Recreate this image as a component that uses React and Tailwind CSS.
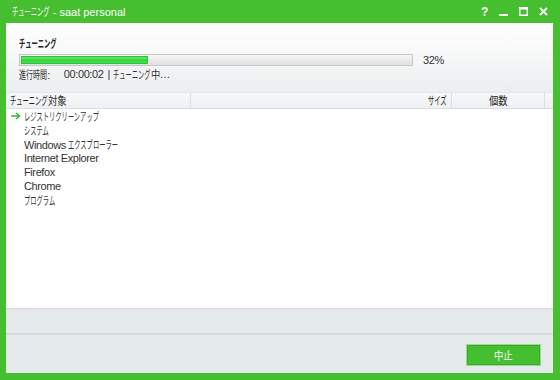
import React from "react";

function cls(ch) {
  const c = ch.charCodeAt(0);
  if (c >= 0x4e00 && c <= 0x9fff) return "h";
  if ((c >= 0x3000 && c <= 0x30ff) || (c >= 0xff00 && c <= 0xffef)) return "k";
  return "l";
}

function T({ children, size = 11, k = 0.57, kk = 0.85 }) {
  const text = String(children);
  const parts = [];
  for (const ch of text) {
    const c = cls(ch);
    if (parts.length && parts[parts.length - 1].c === c) parts[parts.length - 1].t += ch;
    else parts.push({ t: ch, c });
  }
  return (
    <span className="whitespace-pre">
      {parts.map((p, i) => {
        if (p.c === "l") return <span key={i}>{p.t}</span>;
        const s = p.c === "h" ? kk : k;
        return (
          <span
            key={i}
            className="inline-block origin-left tracking-normal font-['Noto_Sans_CJK_JP',sans-serif]"
            style={{ transform: `scaleX(${s})`, marginRight: -[...p.t].length * size * (1 - s) }}
          >
            {p.t}
          </span>
        );
      })}
    </span>
  );
}

export default function App() {
  const rows = [
    "システム",
    "Windows エクスプローラー",
    "Internet Explorer",
    "Firefox",
    "Chrome",
    "プログラム",
  ];
  return (
    <div className="w-[560px] h-[380px] bg-[#45bf2f] flex flex-col font-['Liberation_Sans','Noto_Sans_CJK_JP',sans-serif] text-[11px] leading-[14px] tracking-[-0.4px] text-[#333]">
      {/* title bar */}
      <div className="h-[23px] flex items-center pl-[12px] pr-[12px] text-white text-[11px]">
        <div className="flex-1 h-[14px] flex items-center tracking-[0px]"><T>チューニング - saat personal</T></div>
        <div className="flex items-center gap-[11px]">
          <span className="text-[12px] font-bold leading-none">?</span>
          <svg width="9" height="9" viewBox="0 0 9 9"><rect x="0" y="7" width="9" height="2" fill="white" /></svg>
          <svg width="9" height="9" viewBox="0 0 9 9"><rect x="0.75" y="0.75" width="7.5" height="7.5" fill="none" stroke="white" strokeWidth="1.5" /><rect x="0" y="0" width="9" height="2.5" fill="white" /></svg>
          <svg width="9" height="9" viewBox="0 0 9 9"><path d="M1 1L8 8M8 1L1 8" stroke="white" strokeWidth="1.8" /></svg>
        </div>
      </div>
      {/* body */}
      <div className="flex-1 ml-[6px] mb-[7px] mr-[7px] flex flex-col bg-white">
        {/* top panel */}
        <div className="h-[69px] flex flex-col bg-gradient-to-b from-[#ffffff] to-[#eceeef] pl-[13px] pt-[13px]">
          <div className="h-[14px] flex items-center text-[11px] font-bold text-[#222]"><T>チューニング</T></div>
          <div className="h-[12px] flex items-center mt-[4px]">
            <div className="w-[394px] h-[12px] border border-[#c8c8c8] bg-gradient-to-b from-[#f6f6f6] to-[#e0e0e0] p-[1px]">
              <div className="h-full w-[32.5%] bg-gradient-to-b from-[#6ee86a] via-[#33d63e] to-[#45dc50] border border-[#34c03a]"></div>
            </div>
            <span className="ml-[10px] text-[11px]">32%</span>
          </div>
          <div className="h-[14px] mt-[1px] flex items-center text-[11px]">
            <T kk={0.64}>進行時間:</T>
            <span className="ml-[14px]">00:00:02</span>
            <span className="ml-[4px]">|</span>
            <span className="ml-[3px]"><T>チューニング中</T></span>
            <span className="tracking-[0.5px]">...</span>
          </div>
        </div>
        {/* table header */}
        <div className="h-[17px] flex border-t border-[#e4e6e7] border-b border-b-[#dcdfe0] bg-gradient-to-b from-[#f7f8f9] to-[#eef0f1] text-[11px] text-[#222]">
          <div className="w-[185px] pl-[4px] flex items-center border-r border-[#dcdfe0]"><T>チューニング対象</T></div>
          <div className="w-[261px] pr-[5px] flex items-center justify-end border-r border-[#dcdfe0]"><T>サイズ</T></div>
          <div className="w-[93px] flex items-center justify-center border-r border-[#dcdfe0]"><T>個数</T></div>
          <div className="flex-1"></div>
        </div>
        {/* rows */}
        <div className="h-[199px] bg-white text-[11px] text-[#333]">
          <div className="flex items-center h-[14px] pl-[5px]">
            <svg width="10" height="8" viewBox="0 0 10 8" className="mr-[3px]"><path d="M0 4H8M5 1L8.5 4L5 7" fill="none" stroke="#3cb83a" strokeWidth="1.6" /></svg>
            <T>レジストリクリーンアップ</T>
          </div>
          {rows.map((r) => (
            <div key={r} className="h-[14px] flex items-center pl-[18px]"><T>{r}</T></div>
          ))}
        </div>
        {/* status band */}
        <div className="h-[27px] bg-[#e4e9e9] border-t border-[#d4d8d8] border-b-2 border-b-[#d6dada]"></div>
        {/* footer */}
        <div className="flex-1 bg-[#e4e9e9] flex justify-end items-start pt-[9px] pr-[12px]">
          <button className="w-[75px] h-[22px] flex items-center justify-center bg-[#45bf2f] border border-[#9bd98f] outline outline-1 outline-[#3aa82a] -outline-offset-2 text-white text-[11px]"><T>中止</T></button>
        </div>
      </div>
    </div>
  );
}
